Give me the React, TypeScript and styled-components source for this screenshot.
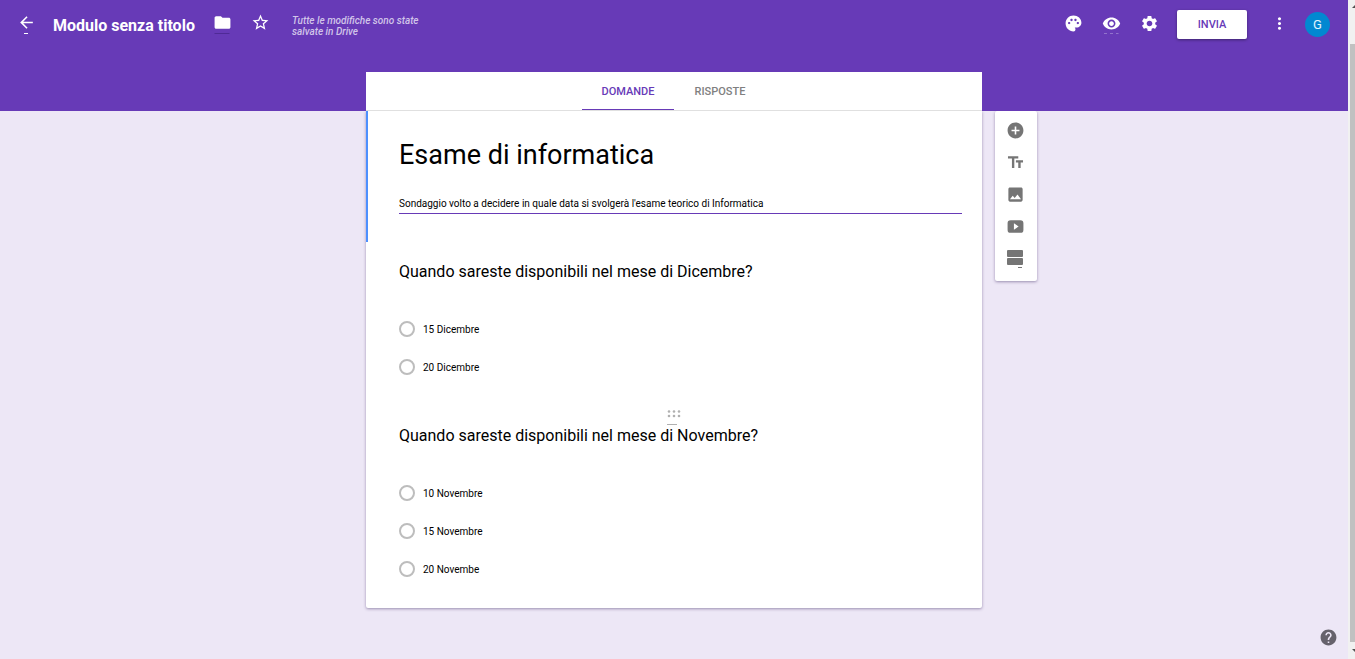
import React from "react";
import styled, { createGlobalStyle } from "styled-components";
import {
  MdAddCircle,
  MdArrowBack,
  MdFolder,
  MdHelp,
  MdImage,
  MdMoreVert,
  MdPalette,
  MdRemoveRedEye,
  MdSettings,
  MdStarBorder,
  MdTextFields,
} from "react-icons/md";

const purple = "#673ab7";
const lavender = "#ede7f6";

const GlobalStyle = createGlobalStyle`
  *, *::before, *::after { box-sizing: border-box; }
  body {
    margin: 0;
    background: ${lavender};
    color: #000;
    font-family: Roboto, "Liberation Sans", sans-serif;
  }
  button, input, textarea { font: inherit; color: inherit; }
`;

const Shell = styled.div`
  display: grid;
  grid-template-columns: minmax(0, 1fr) 7px;
  min-height: 100vh;
`;

const Page = styled.div`
  display: flex;
  flex-direction: column;
  position: relative;
`;

const Header = styled.header`
  display: flex;
  flex-direction: column;
  gap: 24px;
  background: ${purple};
  color: #fff;
`;

const TopBar = styled.div`
  display: flex;
  align-items: center;
  height: 48px;
  padding: 0 18px 0 7px;
`;

const Spacer = styled.div`
  flex: 1;
`;

const IconButton = styled.button<{ $raised?: boolean }>`
  display: flex;
  align-items: center;
  justify-content: center;
  position: relative;
  width: 38px;
  height: 38px;
  padding: 0 0 ${(p) => (p.$raised ? 3 : 1)}px;
  border: 0;
  background: none;
  cursor: pointer;
  svg { width: 19px; height: 19px; overflow: visible; }
`;

const Mark = styled.span<{ $kind: "tip" | "line" | "dots" }>`
  position: absolute;
  bottom: 9px;
  left: 50%;
  transform: translateX(-50%);
  height: 1px;
  width: ${(p) => (p.$kind === "tip" ? "4px" : "15px")};
  background: ${(p) =>
    p.$kind === "tip"
      ? "#fff"
      : p.$kind === "line"
        ? "#4f2a96"
        : "repeating-linear-gradient(90deg, #9273cc 0 3px, transparent 3px 6px)"};
`;

const FormName = styled.input`
  width: 144px;
  height: 24px;
  margin: 2px 6px 0 8px;
  padding: 0;
  border: 0;
  outline: 0;
  background: none;
  font-size: 16px;
  font-weight: 700;
`;

const SavedNote = styled.p`
  width: 140px;
  margin: 4px 0 0 13px;
  color: #d1c4e9;
  font-size: 10px;
  line-height: 11px;
  font-style: italic;
  font-weight: 500;
`;

const SendButton = styled.button`
  width: 70px;
  height: 29px;
  margin: 1px 13px 0 9px;
  padding: 0;
  border: 0;
  border-radius: 2px;
  background: #fff;
  color: ${purple};
  font-size: 11px;
  font-weight: 500;
  box-shadow: 0 1px 3px rgba(0, 0, 0, 0.4);
  cursor: pointer;
`;

const Avatar = styled.button`
  width: 25px;
  height: 25px;
  margin-left: 7px;
  padding: 0;
  border: 0;
  border-radius: 50%;
  background: #0288d1;
  color: #e1f5fe;
  font-size: 13px;
  cursor: pointer;
`;

const Tabs = styled.nav`
  display: flex;
  justify-content: center;
  width: 616px;
  max-width: 100%;
  height: 39px;
  margin: 0 auto;
  background: #fff;
  border-bottom: 1px solid #e0e0e0;
`;

const Tab = styled.button<{ $active?: boolean }>`
  width: 92px;
  padding: 2px 0 0;
  border: 0;
  border-bottom: 1px solid ${(p) => (p.$active ? purple : "transparent")};
  background: none;
  color: ${(p) => (p.$active ? purple : "#808080")};
  font-size: 11px;
  font-weight: 500;
  cursor: pointer;
`;

const Workspace = styled.main`
  display: grid;
  grid-template-columns: 1fr minmax(0, 616px) 1fr;
  column-gap: 13px;
  align-items: start;
  padding-bottom: 51px;
`;

const FormCard = styled.form`
  grid-column: 2;
  background: #fff;
  border-radius: 0 0 2px 2px;
  box-shadow: 0 1px 3px rgba(50, 30, 90, 0.45);
  clip-path: inset(0 -6px -6px);
`;

const Intro = styled.section`
  display: flex;
  flex-direction: column;
  height: 131px;
  padding: 26px 20px 0 31px;
  border-left: 2px solid #4d90fe;
`;

const IntroTitle = styled.input`
  width: 100%;
  height: 36px;
  padding: 0;
  border: 0;
  outline: 0;
  background: none;
  font-size: 27px;
`;

const IntroText = styled.input`
  width: 100%;
  height: 21px;
  margin-top: 20px;
  padding: 0;
  border: 0;
  border-bottom: 1px solid ${purple};
  outline: 0;
  background: none;
  font-size: 10px;
`;

const Question = styled.fieldset`
  position: relative;
  margin: 0;
  padding: 20px 33px 20px;
  border: 0;
`;

const QuestionTitle = styled.h2`
  margin: 0 0 28px;
  font-size: 16px;
  line-height: 20px;
  font-weight: 400;
`;

const Option = styled.label`
  display: flex;
  align-items: center;
  gap: 8px;
  height: 38px;
  font-size: 10px;
`;

const Radio = styled.input`
  appearance: none;
  width: 16px;
  height: 16px;
  margin: 0;
  border: 2px solid #bdbdbd;
  border-radius: 50%;
  &:checked { border: 5px solid ${purple}; }
`;

const DragHandle = styled.svg`
  position: absolute;
  top: 4px;
  left: 50%;
  width: 14px;
  height: 16px;
  margin-left: -7px;
`;

const ToolPanel = styled.aside`
  display: flex;
  flex-direction: column;
  width: 42px;
  padding: 3px 0 7px;
  background: #fff;
  border-radius: 2px;
  box-shadow: 0 1px 3px rgba(50, 30, 90, 0.45);
  clip-path: inset(0 -6px -6px);
`;

const ToolButton = styled.button`
  display: flex;
  align-items: center;
  justify-content: center;
  height: 32px;
  padding: 0 1px 0 0;
  border: 0;
  background: none;
  color: #757575;
  cursor: pointer;
  svg { width: 19px; height: 19px; }
`;

const HelpButton = styled.button`
  display: flex;
  position: absolute;
  right: 10px;
  bottom: 12px;
  padding: 0;
  border: 0;
  background: none;
  color: #66626c;
  cursor: pointer;
  svg { width: 19px; height: 19px; }
`;

const ScrollTrack = styled.div`
  display: flex;
  flex-direction: column;
  align-items: flex-end;
  padding: 5px 0 6px 2px;
  background: #f1f1f1;
  svg { width: 3px; height: 4px; fill: #505050; }
`;

const ScrollThumb = styled.div`
  flex: 1;
  width: 100%;
  margin: 35px 0 7px;
  background: #c1c1c1;
`;

const questions = [
  {
    id: "dicembre",
    title: "Quando sareste disponibili nel mese di Dicembre?",
    options: ["15 Dicembre", "20 Dicembre"],
    handle: false,
  },
  {
    id: "novembre",
    title: "Quando sareste disponibili nel mese di Novembre?",
    options: ["10 Novembre", "15 Novembre", "20 Novembe"],
    handle: true,
  },
];

function VideoIcon() {
  return (
    <svg viewBox="0 0 24 24" fill="currentColor" aria-hidden="true">
      <path d="M6 4h12c3 0 4 1 4 4v8c0 3-1 4-4 4H6c-3 0-4-1-4-4V8c0-3 1-4 4-4zm4 4v8l6-4z" />
    </svg>
  );
}

function SectionIcon() {
  return (
    <svg viewBox="0 0 19 19" fill="currentColor" aria-hidden="true">
      <rect x="1" y="1" width="16" height="7" rx="1" />
      <rect x="1" y="9" width="16" height="7" rx="1" />
      <rect x="12" y="18" width="4" height="1" />
    </svg>
  );
}

export default function App() {
  return (
    <>
      <GlobalStyle />
      <Shell>
        <Page>
          <Header>
            <TopBar>
              <IconButton $raised aria-label="Indietro">
                <MdArrowBack />
                <Mark $kind="tip" />
              </IconButton>
              <FormName aria-label="Nome del modulo" defaultValue="Modulo senza titolo" />
              <IconButton $raised aria-label="Cartella">
                <MdFolder />
                <Mark $kind="line" />
              </IconButton>
              <IconButton $raised aria-label="Speciali">
                <MdStarBorder />
              </IconButton>
              <SavedNote>Tutte le modifiche sono state salvate in Drive</SavedNote>
              <Spacer />
              <IconButton aria-label="Tavolozza">
                <MdPalette />
              </IconButton>
              <IconButton aria-label="Anteprima">
                <MdRemoveRedEye />
                <Mark $kind="dots" />
              </IconButton>
              <IconButton aria-label="Impostazioni">
                <MdSettings />
              </IconButton>
              <SendButton>INVIA</SendButton>
              <IconButton aria-label="Altro">
                <MdMoreVert />
              </IconButton>
              <Avatar aria-label="Account">G</Avatar>
            </TopBar>
            <Tabs>
              <Tab $active>DOMANDE</Tab>
              <Tab>RISPOSTE</Tab>
            </Tabs>
          </Header>
          <Workspace>
            <FormCard>
              <Intro>
                <IntroTitle aria-label="Titolo" defaultValue="Esame di informatica" />
                <IntroText
                  aria-label="Descrizione"
                  defaultValue="Sondaggio volto a decidere in quale data si svolgerà l'esame teorico di Informatica"
                />
              </Intro>
              {questions.map((q) => (
                <Question key={q.id} aria-labelledby={q.id}>
                  {q.handle && (
                    <DragHandle viewBox="0 0 14 16" fill="#b0b0b0" aria-hidden="true">
                      {[2, 7, 12].map((x) => (
                        <React.Fragment key={x}>
                          <circle cx={x} cy="1.5" r="1.3" />
                          <circle cx={x} cy="6" r="1.3" />
                        </React.Fragment>
                      ))}
                      <rect x="0" y="14" width="10" height="1" />
                    </DragHandle>
                  )}
                  <QuestionTitle id={q.id}>{q.title}</QuestionTitle>
                  {q.options.map((o) => (
                    <Option key={o}>
                      <Radio type="radio" name={q.id} value={o} />
                      {o}
                    </Option>
                  ))}
                </Question>
              ))}
            </FormCard>
            <ToolPanel>
              <ToolButton aria-label="Aggiungi domanda"><MdAddCircle /></ToolButton>
              <ToolButton aria-label="Aggiungi titolo"><MdTextFields /></ToolButton>
              <ToolButton aria-label="Aggiungi immagine"><MdImage /></ToolButton>
              <ToolButton aria-label="Aggiungi video"><VideoIcon /></ToolButton>
              <ToolButton aria-label="Aggiungi sezione"><SectionIcon /></ToolButton>
            </ToolPanel>
          </Workspace>
          <HelpButton aria-label="Guida"><MdHelp /></HelpButton>
        </Page>
        <ScrollTrack aria-hidden="true">
          <svg viewBox="0 0 3 4"><path d="M0 3L3 0V3z" /></svg>
          <ScrollThumb />
          <svg viewBox="0 0 3 4"><path d="M0 0H3V3z" /></svg>
        </ScrollTrack>
      </Shell>
    </>
  );
}
